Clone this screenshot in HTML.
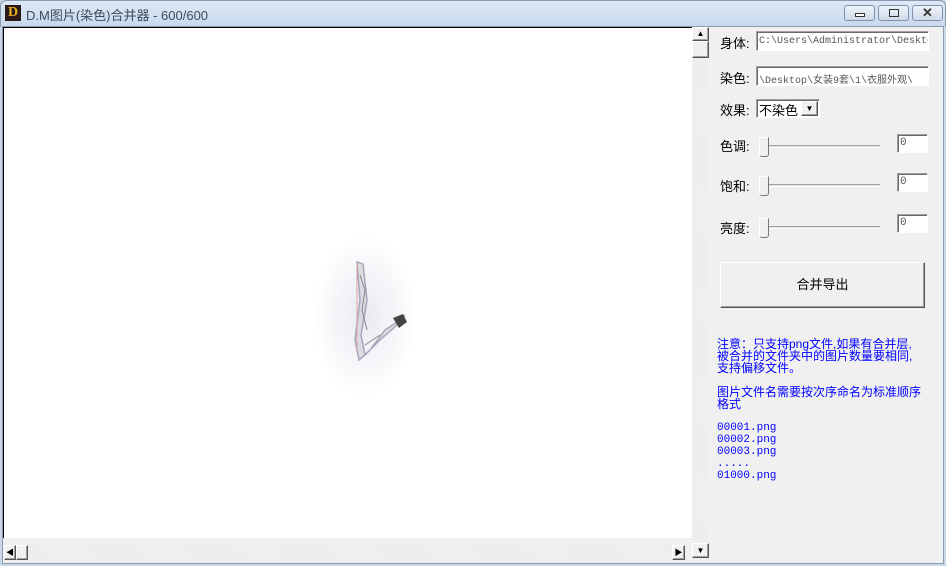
<!DOCTYPE html>
<html><head><meta charset="utf-8"><style>
*{margin:0;padding:0;box-sizing:border-box}
body{width:946px;height:566px;overflow:hidden;background:#c9d9ea;font-family:"Liberation Sans","Noto Sans CJK SC",sans-serif;position:relative}
.abs{position:absolute}
.title{left:0;top:0;width:946px;height:27px;background:linear-gradient(#dde8f4,#c8d9ec);border:1px solid #8a9bb0;border-bottom:none;border-radius:6px 6px 0 0}
.tt{left:26px;top:5px;font-size:13px;color:#3b4b60}
.logo{left:5px;top:5px;width:16px;height:16px;background:#2a1a1a;color:#e8b020;font:bold 14px "Liberation Serif",serif;text-align:center;line-height:16px}
.wb{top:5px;height:16px;border:1px solid #8093ad;border-radius:3px;background:linear-gradient(#eef3f9,#cfdbea)}
.client{left:2px;top:26px;width:942px;height:538px;background:#f0f0f0;border:1px solid #8a9bb0}
.canvas{left:3px;top:27px;width:689px;height:511px;background:#fff;border-top:1px solid #000;border-left:1px solid #000}
.hatch{background-color:#f4f4f4;background-image:repeating-linear-gradient(45deg,#e8e8e8 0 1px,transparent 1px 2px)}
.btn{background:#f0f0f0;border:1px solid;border-color:#fff #555 #555 #fff;box-shadow:inset -1px -1px #a0a0a0}
.lbl{font-size:13px;color:#000}
.inp{background:#fff;border:1px solid;border-color:#a0a0a0 #fff #fff #a0a0a0;box-shadow:inset 1px 1px #696969;font:10px "Liberation Mono","Noto Sans CJK SC",monospace;color:#555;white-space:nowrap;overflow:hidden;padding:4px 0 0 2px}
.trk{height:3px;border-top:1px solid #a0a0a0;border-bottom:1px solid #fff;background:#e3e3e3}
.thumb{width:10px;height:20px;background:#f0f0f0;border:1px solid;border-color:#fff #777 #777 #fff;border-radius:0 0 3px 3px}
.blue{color:#0000ff;font-size:12px;line-height:12px;font-family:"Liberation Sans","Noto Sans CJK SC",sans-serif}
.mono{color:#0000ff;font:11px/12px "Liberation Mono",monospace}
</style></head><body>
<div class="abs title"></div>
<div class="abs logo">D</div>
<div class="abs tt">D.M图片(染色)合并器 - 600/600</div>
<div class="abs wb" style="left:844px;width:31px"><div class="abs" style="left:10px;top:7px;width:10px;height:4px;border:1px solid #333;background:#fff"></div></div>
<div class="abs wb" style="left:878px;width:31px"><div class="abs" style="left:10px;top:3px;width:10px;height:8px;border:1px solid #333"></div></div>
<div class="abs wb" style="left:912px;width:31px;text-align:center;font:bold 13px sans-serif;color:#333;line-height:14px">✕</div>
<div class="abs client"></div>
<div class="abs canvas"></div>
<div class="abs" style="left:300px;top:230px;width:130px;height:180px;background:radial-gradient(ellipse 40% 45% at 50% 48%,rgba(215,215,230,.55),rgba(255,255,255,0))"></div>
<svg class="abs" style="left:345px;top:250px" width="70" height="130" style="filter:blur(.4px)"><path d="M12 12 L15 50 L10 90 L14 110 L25 100 L40 80 L55 70 L60 65 L52 75 L35 90 L20 105 L16 85 L22 50 L18 14Z" fill="#d8d8e0" stroke="#9a9ab0" stroke-width="1.5" opacity=".85"/><path d="M15 25 L20 40 L17 60 L22 80 M20 95 L35 85" stroke="#888" stroke-width="1" fill="none"/><path d="M48 68 L58 64 L62 72 L54 78Z" fill="#444"/><path d="M12 15 L12 100" stroke="#e0a0a0" stroke-width="1"/></svg>
<!-- v scrollbar -->
<div class="abs hatch" style="left:692px;top:27px;width:17px;height:532px"></div>
<div class="abs btn" style="left:692px;top:27px;width:17px;height:14px;font-size:8px;text-align:center;line-height:12px">▲</div>
<div class="abs btn" style="left:692px;top:41px;width:17px;height:17px"></div>
<div class="abs btn" style="left:692px;top:543px;width:17px;height:15px;font-size:8px;text-align:center;line-height:13px">▼</div>
<!-- h scrollbar -->
<div class="abs" style="left:3px;top:538px;width:689px;height:6px;background:#f0f0f0"></div>
<div class="abs hatch" style="left:4px;top:545px;width:681px;height:15px"></div>
<div class="abs btn" style="left:4px;top:545px;width:12px;height:15px;font-size:8px;line-height:13px;text-align:center">◀</div>
<div class="abs btn" style="left:16px;top:545px;width:12px;height:15px"></div>
<div class="abs btn" style="left:672px;top:545px;width:13px;height:15px;font-size:8px;line-height:13px;text-align:center">▶</div>
<!-- panel -->
<div class="abs lbl" style="left:720px;top:33px">身体:</div>
<div class="abs inp" style="left:756px;top:31px;width:173px;height:20px">C:\Users\Administrator\Desktop</div>
<div class="abs lbl" style="left:720px;top:68px">染色:</div>
<div class="abs inp" style="left:756px;top:66px;width:173px;height:20px">\Desktop\女装9套\1\衣服外观\</div>
<div class="abs lbl" style="left:720px;top:100px">效果:</div>
<div class="abs inp" style="left:756px;top:99px;width:64px;height:19px;color:#000;font-size:13px;padding:0 0 0 2px;font-family:'Liberation Sans','Noto Sans CJK SC',sans-serif">不染色</div>
<div class="abs btn" style="left:801px;top:101px;width:17px;height:15px;font-size:8px;line-height:13px;text-align:center">▼</div>

<div class="abs lbl" style="left:720px;top:136px">色调:</div>
<div class="abs trk" style="left:759px;top:145px;width:121px"></div>
<div class="abs thumb" style="left:759px;top:137px"></div>
<div class="abs inp" style="left:897px;top:134px;width:31px;height:19px;padding:2px 2px;font-size:11px">0</div>

<div class="abs lbl" style="left:720px;top:176px">饱和:</div>
<div class="abs trk" style="left:759px;top:184px;width:121px"></div>
<div class="abs thumb" style="left:759px;top:176px"></div>
<div class="abs inp" style="left:897px;top:173px;width:31px;height:19px;padding:2px 2px;font-size:11px">0</div>

<div class="abs lbl" style="left:720px;top:218px">亮度:</div>
<div class="abs trk" style="left:759px;top:226px;width:121px"></div>
<div class="abs thumb" style="left:759px;top:218px"></div>
<div class="abs inp" style="left:897px;top:214px;width:31px;height:19px;padding:2px 2px;font-size:11px">0</div>

<div class="abs btn" style="left:720px;top:262px;width:205px;height:46px;font-size:13px;text-align:center;line-height:44px">合并导出</div>

<div class="abs blue" style="left:717px;top:338px;width:210px">注意：只支持png文件,如果有合并层,<br>被合并的文件夹中的图片数量要相同,<br>支持偏移文件。</div>
<div class="abs blue" style="left:717px;top:386px;width:215px">图片文件名需要按次序命名为标准顺序<br>格式</div>
<div class="abs mono" style="left:717px;top:422px">00001.png<br>00002.png<br>00003.png<br>.....<br>01000.png</div>
</body></html>
